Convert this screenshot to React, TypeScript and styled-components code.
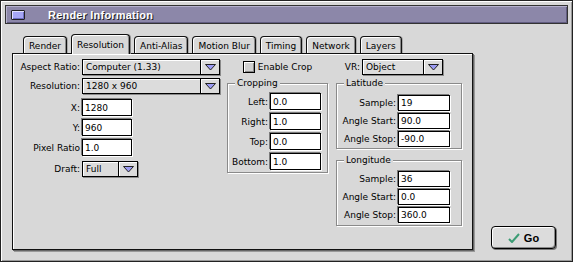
import styled, { createGlobalStyle } from "styled-components";

const GlobalStyle = createGlobalStyle`
  html, body {
    margin: 0;
    padding: 0;
    background: #d8d8d8;
  }
`;

const Window = styled.div`
  width: 573px;
  height: 262px;
  box-sizing: border-box;
  border: 1px solid #222;
  background: #d8d8d8;
  box-shadow: inset 1px 1px 0 #fff, inset -1px -1px 0 #999;
  padding: 4px 4px 0 4px;
  display: flex;
  flex-direction: column;
  font-family: "DejaVu Sans", Verdana, sans-serif;
  font-size: 9px;
  color: #000;
`;

const TitleBar = styled.div`
  height: 19px;
  box-sizing: border-box;
  border: 1px solid #333;
  background: #8c87a9;
  box-shadow: inset 1px 1px 0 #b4b0cc, inset -1px -1px 0 #615c80;
  display: flex;
  align-items: center;
`;

const CloseBox = styled.div`
  width: 14px;
  height: 10px;
  box-sizing: border-box;
  margin-left: 5px;
  border: 1px solid #222;
  border-radius: 1px;
  background: #a6a6f4;
  box-shadow: inset 1px 1px 0 #e0e0ff, inset -1px -1px 0 #6c6cc0;
`;

const TitleText = styled.span`
  margin-left: 23px;
  font-family: "Liberation Sans", Arial, sans-serif;
  font-weight: bold;
  font-size: 11px;
  letter-spacing: 0.2px;
  color: #fff;
  text-shadow: 1px 1px 0 #222;
`;

const Body = styled.div`
  display: flex;
  margin-top: 10px;
`;

const TabArea = styled.div`
  margin-left: 7px;
  display: flex;
  flex-direction: column;
`;

const TabRow = styled.div`
  display: flex;
  align-items: flex-end;
  gap: 4px;
  height: 20px;
  padding-left: 11px;
  margin-bottom: -1px;
  position: relative;
  z-index: 1;
`;

const Tab = styled.div<{ $active?: boolean }>`
  box-sizing: border-box;
  height: ${(p) => (p.$active ? 20 : 17)}px;
  margin-bottom: ${(p) => (p.$active ? 0 : 1)}px;
  padding: 0 5px;
  display: flex;
  align-items: center;
  border: 1px solid #111;
  border-bottom: none;
  border-radius: 4px 4px 0 0;
  background: #d8d8d8;
  box-shadow: inset 1px 1px 0 #fff, inset -1px 0 0 #8a8a8a,
    1px 0 0 ${(p) => (p.$active ? "#8a8a8a" : "#aaa")};
  padding-top: ${(p) => (p.$active ? 0 : 1)}px;
  white-space: nowrap;
`;

const Panel = styled.div`
  width: 461px;
  height: 197px;
  box-sizing: border-box;
  border: 1px solid #111;
  background: #d8d8d8;
  box-shadow: inset 1px 1px 0 #fff, 1px 1px 0 #666, 2px 2px 0 #999;
  display: flex;
`;

const Column = styled.div<{ $width: number; $left?: number; $top?: number }>`
  width: ${(p) => p.$width}px;
  margin-left: ${(p) => p.$left ?? 0}px;
  padding-top: ${(p) => p.$top ?? 5}px;
  display: flex;
  flex-direction: column;
`;

const FormRow = styled.div<{ $top?: number }>`
  display: flex;
  align-items: center;
  margin-top: ${(p) => p.$top ?? 0}px;
`;

const Label = styled.div<{ $width: number }>`
  width: ${(p) => p.$width}px;
  box-sizing: border-box;
  padding-right: 2px;
  text-align: right;
  white-space: nowrap;
`;

const Popup = styled.div<{ $width: number }>`
  width: ${(p) => p.$width}px;
  height: 16px;
  box-sizing: border-box;
  border: 1px solid #000;
  background: #dcdcdc;
  box-shadow: inset 1px 1px 0 #fff, 1px 1px 0 #8a8a8a;
  display: flex;
  align-items: stretch;
`;

const PopupValue = styled.div`
  flex: 1;
  padding-left: 3px;
  display: flex;
  align-items: center;
  white-space: nowrap;
`;

const PopupArrow = styled.div`
  width: 18px;
  border-left: 1px solid #000;
  box-shadow: inset 1px 1px 0 #fff;
  display: flex;
  align-items: center;
  justify-content: center;
`;

const Field = styled.div<{ $width: number; $height?: number }>`
  width: ${(p) => p.$width}px;
  height: ${(p) => p.$height ?? 17}px;
  box-sizing: border-box;
  border: 1px solid #000;
  background: #fff;
  box-shadow: -1px -1px 0 #7a7a7a, 1px 1px 0 #fff;
  padding-left: 2px;
  display: flex;
  align-items: center;
`;

const CheckRow = styled.div`
  display: flex;
  align-items: center;
  justify-content: center;
  gap: 3px;
  height: 12px;
  margin-top: 1px;
`;

const CheckBox = styled.div`
  width: 12px;
  height: 12px;
  box-sizing: border-box;
  border: 1px solid #000;
  background: #d0d0d0;
  box-shadow: inset 1px 1px 0 #fff, inset -1px -1px 0 #888;
`;

const GroupBox = styled.div<{ $top: number; $padTop: number; $padBottom: number; $gap: number }>`
  position: relative;
  margin-top: ${(p) => p.$top}px;
  border: 1px solid #8a8a8a;
  box-shadow: inset 1px 1px 0 #fff, 1px 1px 0 #fff;
  padding: ${(p) => p.$padTop}px 0 ${(p) => p.$padBottom}px 0;
  display: flex;
  flex-direction: column;
  gap: ${(p) => p.$gap}px;
`;

const Legend = styled.span`
  position: absolute;
  top: -7px;
  left: 7px;
  padding: 0 2px;
  background: #d8d8d8;
  line-height: 12px;
`;

const RightArea = styled.div`
  flex: 1;
  display: flex;
  align-items: flex-end;
  padding-left: 18px;
`;

const GoButton = styled.div`
  width: 65px;
  height: 23px;
  box-sizing: border-box;
  margin-bottom: 1px;
  border: 1px solid #000;
  border-radius: 4px;
  background: #dcdcdc;
  box-shadow: inset 1px 1px 0 #fff, inset -1px -1px 0 #888, 1px 1px 0 #777;
  display: flex;
  align-items: center;
  justify-content: center;
  gap: 4px;
  font-family: "Liberation Sans", Arial, sans-serif;
  font-weight: bold;
  font-size: 11px;
`;

const Arrow = () => (
  <svg width="11" height="7" viewBox="0 0 11 7">
    <polygon points="0.5,0.5 10.5,0.5 5.5,6" fill="#9c9cf4" stroke="#222" strokeWidth="1" />
  </svg>
);

const Check = () => (
  <svg width="12" height="10" viewBox="0 0 12 10">
    <path d="M1 6 L4 9 L11 1" fill="none" stroke="#3c9c74" strokeWidth="2" />
  </svg>
);

const tabs = ["Render", "Resolution", "Anti-Alias", "Motion Blur", "Timing", "Network", "Layers"];

const cropping = [
  ["Left:", "0.0"],
  ["Right:", "1.0"],
  ["Top:", "0.0"],
  ["Bottom:", "1.0"],
];

const latitude = [
  ["Sample:", "19"],
  ["Angle Start:", "90.0"],
  ["Angle Stop:", "-90.0"],
];

const longitude = [
  ["Sample:", "36"],
  ["Angle Start:", "0.0"],
  ["Angle Stop:", "360.0"],
];

function PopupMenu({ width, value }: { width: number; value: string }) {
  return (
    <Popup $width={width}>
      <PopupValue>{value}</PopupValue>
      <PopupArrow>
        <Arrow />
      </PopupArrow>
    </Popup>
  );
}

export default function App() {
  return (
    <>
      <GlobalStyle />
      <Window>
        <TitleBar>
          <CloseBox />
          <TitleText>Render Information</TitleText>
        </TitleBar>
        <Body>
          <TabArea>
            <TabRow>
              {tabs.map((t) => (
                <Tab key={t} $active={t === "Resolution"}>
                  {t}
                </Tab>
              ))}
            </TabRow>
            <Panel>
              <Column $width={208}>
                <FormRow>
                  <Label $width={69}>Aspect Ratio:</Label>
                  <PopupMenu width={138} value="Computer (1.33)" />
                </FormRow>
                <FormRow $top={3}>
                  <Label $width={69}>Resolution:</Label>
                  <PopupMenu width={138} value="1280 x 960" />
                </FormRow>
                <FormRow $top={5}>
                  <Label $width={69}>X:</Label>
                  <Field $width={50}>1280</Field>
                </FormRow>
                <FormRow $top={3}>
                  <Label $width={69}>Y:</Label>
                  <Field $width={50}>960</Field>
                </FormRow>
                <FormRow $top={3}>
                  <Label $width={69}>Pixel Ratio</Label>
                  <Field $width={50}>1.0</Field>
                </FormRow>
                <FormRow $top={5}>
                  <Label $width={69}>Draft:</Label>
                  <PopupMenu width={56} value="Full" />
                </FormRow>
              </Column>

              <Column $width={101} $left={6} $top={6}>
                <CheckRow>
                  <CheckBox />
                  <span>Enable Crop</span>
                </CheckRow>
                <GroupBox $top={10} $padTop={9} $padBottom={2} $gap={3}>
                  <Legend>Cropping</Legend>
                  {cropping.map(([l, v]) => (
                    <FormRow key={l}>
                      <Label $width={42}>{l}</Label>
                      <Field $width={51}>{v}</Field>
                    </FormRow>
                  ))}
                </GroupBox>
              </Column>

              <Column $width={126} $left={8}>
                <FormRow>
                  <Label $width={26}>VR:</Label>
                  <PopupMenu width={81} value="Object" />
                </FormRow>
                <GroupBox $top={8} $padTop={11} $padBottom={1} $gap={2}>
                  <Legend>Latitude</Legend>
                  {latitude.map(([l, v]) => (
                    <FormRow key={l}>
                      <Label $width={61}>{l}</Label>
                      <Field $width={52} $height={16}>
                        {v}
                      </Field>
                    </FormRow>
                  ))}
                </GroupBox>
                <GroupBox $top={11} $padTop={10} $padBottom={2} $gap={2}>
                  <Legend>Longitude</Legend>
                  {longitude.map(([l, v]) => (
                    <FormRow key={l}>
                      <Label $width={61}>{l}</Label>
                      <Field $width={52} $height={16}>
                        {v}
                      </Field>
                    </FormRow>
                  ))}
                </GroupBox>
              </Column>
            </Panel>
          </TabArea>
          <RightArea>
            <GoButton>
              <Check />
              <span>Go</span>
            </GoButton>
          </RightArea>
        </Body>
      </Window>
    </>
  );
}
